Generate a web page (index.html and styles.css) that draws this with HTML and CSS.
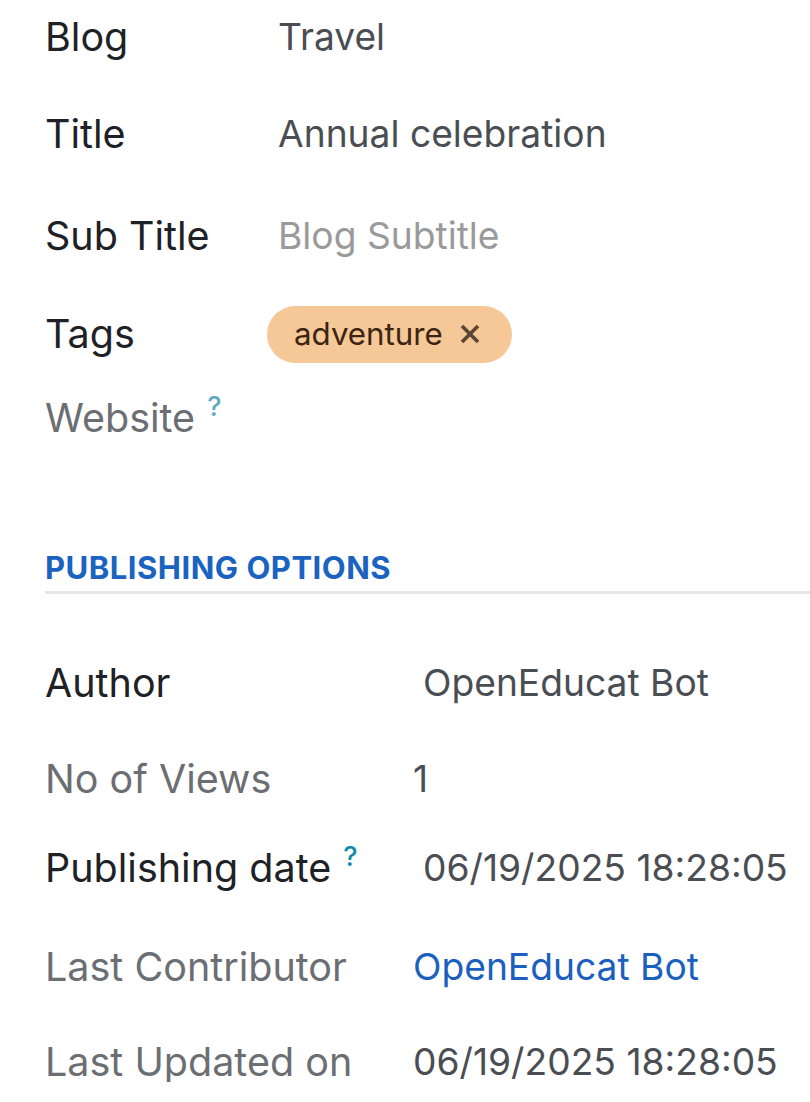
FILE: index.html
```html
<!DOCTYPE html>
<html>
<head>
<meta charset="utf-8">
<link rel="stylesheet" href="styles.css">
</head>
<body>
<div class="sheet">
  <div class="group group-main">
    <div class="row"><div class="label">Blog</div><div class="value">Travel</div></div>
    <div class="row"><div class="label">Title</div><div class="value">Annual celebration</div></div>
    <div class="row row-sub"><div class="label">Sub Title</div><div class="value placeholder">Blog Subtitle</div></div>
    <div class="row row-tags"><div class="label">Tags</div><div class="value"><span class="tag">adventure<svg class="tag-x" width="22" height="22" viewBox="0 0 22 22"><path d="M3 3 L19 19 M19 3 L3 19" stroke="#5a4634" stroke-width="3.6" stroke-linecap="butt" fill="none"/></svg></span></div></div>
    <div class="row row-web"><div class="label muted">Website<sup class="help help-muted">?</sup></div><div class="value"></div></div>
  </div>
  <div class="separator">PUBLISHING OPTIONS</div>
  <div class="group group-pub">
    <div class="row"><div class="label">Author</div><div class="value pad">OpenEducat Bot</div></div>
    <div class="row row-views"><div class="label muted">No of Views</div><div class="value">1</div></div>
    <div class="row row-date"><div class="label">Publishing date<sup class="help">?</sup></div><div class="value pad">06/19/2025 18:28:05</div></div>
    <div class="row row-contrib"><div class="label muted">Last Contributor</div><div class="value link">OpenEducat Bot</div></div>
    <div class="row row-updated"><div class="label muted">Last Updated on</div><div class="value">06/19/2025 18:28:05</div></div>
  </div>
</div>
</body>
</html>
```

FILE: styles.css
```css
html, body {
  margin: 0;
  padding: 0;
  background: #ffffff;
}
body {
  font-family: Inter, "Noto Sans", sans-serif;
  font-size: 36px;
  color: #212529;
  overflow: hidden;
}
.sheet {
  padding: 17px 0 0 45px;
}
.group {
  display: flex;
  flex-direction: column;
  gap: 57px;
}
.row {
  display: flex;
  align-items: center;
  height: 40px;
  line-height: 40px;
}
.group-main .label {
  width: 233px;
  flex: none;
}
.group-pub .label {
  width: 368px;
  flex: none;
}
.label {
  color: #1e2125;
  font-size: 39.5px;
  white-space: nowrap;
}
.label.muted {
  color: #6b6e72;
}
.value {
  color: #4a4e53;
  font-size: 37.2px;
  white-space: nowrap;
}
.value.pad {
  padding-left: 10px;
}
.value.placeholder {
  color: #9a9a9a;
}
.value.link {
  color: #1b5fbf;
}
.row-sub {
  margin-top: 5px;
}
.row-tags {
  margin-top: 1px;
}
.row-web {
  margin-top: -13px;
}
.tag {
  display: inline-flex;
  align-items: center;
  margin-left: -11px;
  height: 57px;
  padding: 0 31px 0 27px;
  border-radius: 29px;
  background: #f6c797;
  color: #3b2512;
  font-size: 31.3px;
}
.tag-x {
  margin-left: 16px;
  display: block;
}
.help {
  font-size: 27px;
  line-height: 0;
  margin-left: 12px;
  vertical-align: 16px;
  color: #0e8ba8;
  font-weight: 500;
}
.help.help-muted {
  color: #5ea9c4;
}
.separator {
  margin-top: 113px;
  padding-bottom: 6px;
  border-bottom: 3px solid #e6e6e6;
  color: #1b63c1;
  font-weight: 700;
  font-size: 31px;
  letter-spacing: 0.5px;
  line-height: 34px;
}
.group-pub {
  margin-top: 69px;
}
.row-views {
  margin-top: -1px;
}
.row-date {
  margin-top: -8px;
}
.row-contrib {
  margin-top: 2px;
}
.row-updated {
  margin-top: -2px;
}
```
